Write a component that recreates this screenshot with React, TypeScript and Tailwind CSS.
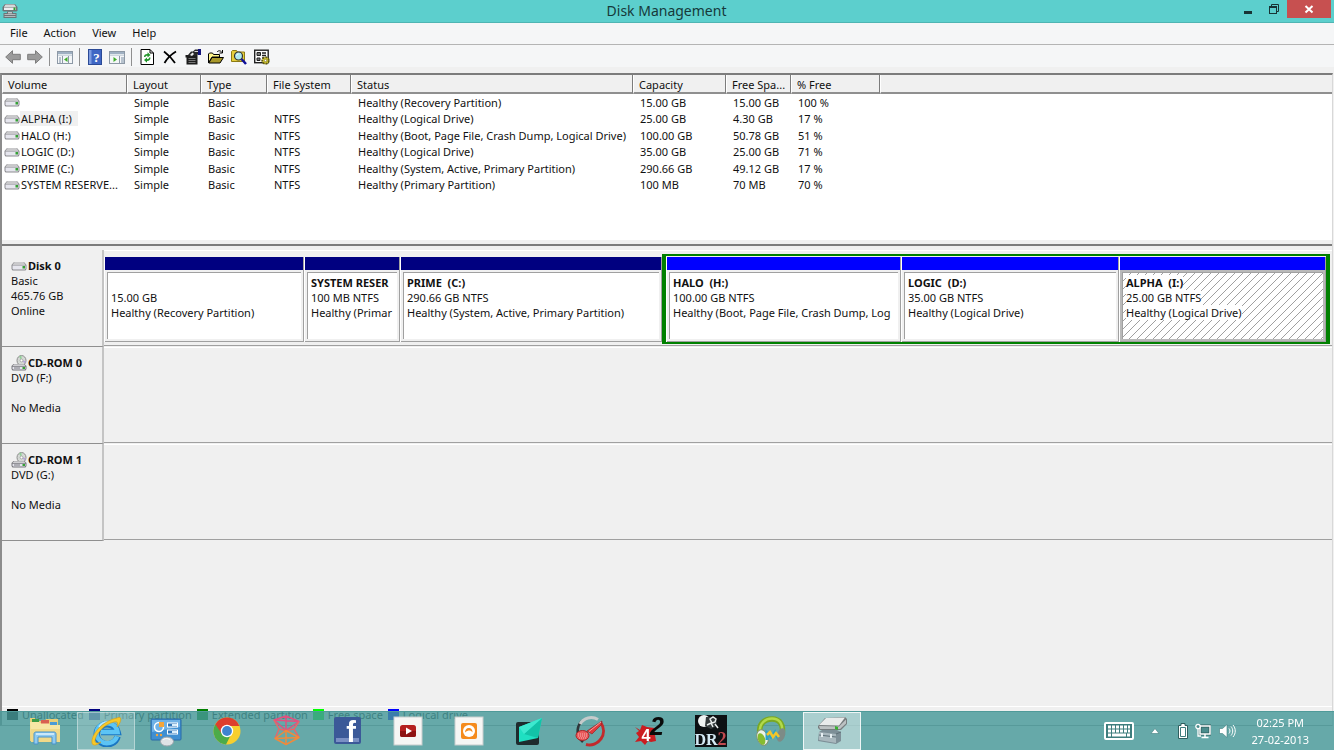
import type { ReactNode } from 'react';

type Partition = {
  name: string;
  size: string;
  status: string;
  weight: number;
  selected?: boolean;
};

const columns = [
  { label: 'Volume', width: 'w-[125px]' },
  { label: 'Layout', width: 'w-[74px]' },
  { label: 'Type', width: 'w-[66px]' },
  { label: 'File System', width: 'w-[84px]' },
  { label: 'Status', width: 'w-[282px]' },
  { label: 'Capacity', width: 'w-[93px]' },
  { label: 'Free Spa...', width: 'w-[65px]' },
  { label: '% Free', width: 'w-[89px]' },
];

const volumes = [
  { name: '', fs: '', status: 'Healthy (Recovery Partition)', capacity: '15.00 GB', free: '15.00 GB', percent: '100 %' },
  { name: 'ALPHA (I:)', fs: 'NTFS', status: 'Healthy (Logical Drive)', capacity: '25.00 GB', free: '4.30 GB', percent: '17 %', selected: true },
  { name: 'HALO (H:)', fs: 'NTFS', status: 'Healthy (Boot, Page File, Crash Dump, Logical Drive)', capacity: '100.00 GB', free: '50.78 GB', percent: '51 %' },
  { name: 'LOGIC (D:)', fs: 'NTFS', status: 'Healthy (Logical Drive)', capacity: '35.00 GB', free: '25.00 GB', percent: '71 %' },
  { name: 'PRIME (C:)', fs: 'NTFS', status: 'Healthy (System, Active, Primary Partition)', capacity: '290.66 GB', free: '49.12 GB', percent: '17 %' },
  { name: 'SYSTEM RESERVE...', fs: 'NTFS', status: 'Healthy (Primary Partition)', capacity: '100 MB', free: '70 MB', percent: '70 %' },
];

const primary: Partition[] = [
  { name: '', size: '15.00 GB', status: 'Healthy (Recovery Partition)', weight: 198 },
  { name: 'SYSTEM RESER', size: '100 MB NTFS', status: 'Healthy (Primar', weight: 94 },
  { name: 'PRIME  (C:)', size: '290.66 GB NTFS', status: 'Healthy (System, Active, Primary Partition)', weight: 260 },
];

const logical: Partition[] = [
  { name: 'HALO  (H:)', size: '100.00 GB NTFS', status: 'Healthy (Boot, Page File, Crash Dump, Log', weight: 233 },
  { name: 'LOGIC  (D:)', size: '35.00 GB NTFS', status: 'Healthy (Logical Drive)', weight: 216 },
  { name: 'ALPHA  (I:)', size: '25.00 GB NTFS', status: 'Healthy (Logical Drive)', weight: 205, selected: true },
];

const legend = [
  { label: 'Unallocated', color: 'bg-black' },
  { label: 'Primary partition', color: 'bg-[#000080]' },
  { label: 'Extended partition', color: 'bg-[#008000]' },
  { label: 'Free space', color: 'bg-[#00ff00]' },
  { label: 'Logical drive', color: 'bg-[#0000ff]' },
];

/* Small icons */

const DriveIcon = () => (
  <svg viewBox="0 0 16 10" className="h-[10px] w-4 shrink-0" aria-hidden="true">
    <path d="M3 1h10l2.500 3v4l-1 1.500h-13L.5 8V4z" fill="#8b8b8f" />
    <path d="M3.500 1h9l2 3h-13z" fill="#c9c9cb" />
    <path d="M1.500 4.500h13v3l-.7 1H2.200l-.7-1z" fill="#e6e6ee" />
    <rect x="11.500" y="5" width="2.500" height="2.500" fill="#35a035" />
  </svg>
);

const CdDriveIcon = () => (
  <svg viewBox="0 0 16 16" className="h-4 w-4 shrink-0" aria-hidden="true">
    <ellipse cx="10.500" cy="5.500" rx="4.500" ry="5" fill="#d4d8d4" stroke="#8e8e8e" />
    <path d="M10.500 5.500L8 1.500l2.500-1z" fill="#8fcf96" />
    <path d="M10.500 5.500l3.500 3 .8-2.500z" fill="#b7a6d8" />
    <circle cx="10.500" cy="5.500" r="1.400" fill="#fff" stroke="#888" strokeWidth=".6" />
    <path d="M2.500 9h11L15.500 11v3l-1 1.500h-13L.5 14v-3z" fill="#77777c" />
    <path d="M3 9.300h10l1.500 1.700h-13z" fill="#cfcfd2" />
    <path d="M1.500 11.800h13v1.700l-.7 1H2.200l-.7-1z" fill="#e4e4ec" />
    <rect x="11.500" y="12" width="2.500" height="2" fill="#35a035" />
    <path d="M3 13h6" stroke="#77777c" />
  </svg>
);

const AppIcon = () => (
  <svg viewBox="0 0 16 16" className="h-4 w-4 shrink-0" aria-hidden="true">
    <path d="M3 1h10l2.500 3v3.500l-1 1h-13l-1-1V4z" fill="#6f7477" />
    <path d="M3.500 1.500h9L14 4H2z" fill="#d5d8d9" />
    <rect x="2" y="4.500" width="12" height="2.500" fill="#eceef0" />
    <rect x="11.500" y="4.500" width="2" height="2.500" fill="#2fa02f" />
    <path d="M5 8.500h6v1.500h3.500v5h-13v-5H5z" fill="#6d7477" />
    <path d="M2.500 11h11v1h-11zM2.500 13h11v1h-11z" fill="#b3babd" />
    <rect x="6" y="9.300" width="4" height="1" fill="#e8ecee" />
  </svg>
);

const BackIcon = () => (
  <svg viewBox="0 0 16 16" className="h-4 w-4">
    <path d="M.7 8L7.500 1.700v3.600h7.800v5.400H7.500v3.600z" fill="#9b9b9b" stroke="#7d7d7d" />
  </svg>
);

const ForwardIcon = () => (
  <svg viewBox="0 0 16 16" className="h-4 w-4">
    <path d="M15.300 8L8.500 1.700v3.600H.7v5.400h7.800v3.600z" fill="#9b9b9b" stroke="#7d7d7d" />
  </svg>
);

const TreePaneIcon = () => (
  <svg viewBox="0 0 16 16" className="h-4 w-4">
    <rect x=".5" y="2.500" width="15" height="12" fill="#f4f6f8" stroke="#8d99a6" />
    <path d="M1 3h14v2H1z" fill="#9fb0c2" />
    <path d="M1 5.500h14v1.500H1z" fill="#cdd6df" />
    <path d="M5.500 7v7M11.500 7v7" stroke="#8d99a6" />
    <path d="M2 9h2M2 11h2M2 13h2" stroke="#7d90a5" />
    <path d="M10.500 8v5L7 10.500z" fill="#3fae2a" />
  </svg>
);

const ActionPaneIcon = () => (
  <svg viewBox="0 0 16 16" className="h-4 w-4">
    <rect x=".5" y="2.500" width="15" height="12" fill="#f4f6f8" stroke="#8d99a6" />
    <path d="M1 3h14v2H1z" fill="#9fb0c2" />
    <path d="M1 5.500h14v1.500H1z" fill="#cdd6df" />
    <path d="M10.500 7v7" stroke="#8d99a6" />
    <path d="M12 9h3M12 11h3M12 13h3" stroke="#7d90a5" />
    <path d="M4.500 8v5L8 10.500z" fill="#3fae2a" />
  </svg>
);

const HelpIcon = () => (
  <svg viewBox="0 0 16 16" className="h-4 w-4">
    <rect x="1.500" y=".5" width="13" height="15" fill="#3f66c4" stroke="#2b4a96" />
    <path d="M2 1h2.500v14H2z" fill="#7d9be0" />
    <text x="9.500" y="13" textAnchor="middle" fontSize="13" fontWeight="700" fontFamily="Liberation Serif, serif" fill="#fff">?</text>
  </svg>
);

const RefreshIcon = () => (
  <svg viewBox="0 0 16 16" className="h-4 w-4">
    <path d="M2 .5h9l3.500 3.500v11.500H2z" fill="#fff" stroke="#000" />
    <path d="M11 .5v3.500h3.500" fill="none" stroke="#000" />
    <path d="M5 8c0-2 1-3 3.500-3V3.200L11.500 6l-3 2.500V6.700C7 6.700 6.500 7 6.500 8z" fill="#22962a" />
    <path d="M11.500 8.500c0 2-1 3.500-3.500 3.500v1.800L5 11l3-2.500v1.700c1.500 0 2-.7 2-1.700z" fill="#22962a" />
  </svg>
);

const DeleteIcon = () => (
  <svg viewBox="0 0 16 16" className="h-4 w-4">
    <path d="M2 2.500c4 3 8 7 11 11.500M14 2.500C9 5.500 5 9.500 2.500 14" fill="none" stroke="#000" strokeWidth="1.800" />
  </svg>
);

const PropertiesIcon = () => (
  <svg viewBox="0 0 16 16" className="h-4 w-4">
    <path d="M.5 6h12v9.500h-11V8.500h-1z" fill="#1c1c1c" />
    <path d="M3.500 9.500h7M3.500 11.500h7M3.500 13.500h7" stroke="#777" />
    <path d="M3 6l3-3.500h2L10 .5h3v5l-3 1.500-2-1-2 2z" fill="#2a2a2a" />
    <path d="M5 6l2.500-2.500L9 5 7 7z" fill="#eee" />
    <path d="M9.500 2.500H13" stroke="#d8d8d8" />
    <path d="M13 0h3v6h-3z" fill="#14147a" />
  </svg>
);

const OpenIcon = () => (
  <svg viewBox="0 0 16 16" className="h-4 w-4">
    <path d="M.5 14V5l1-1h3l1 1.500h6V8H4z" fill="#fff58a" stroke="#000" />
    <path d="M.8 14L4 8.500h11.500L12 14z" fill="#a8982a" stroke="#000" />
    <path d="M9 3c1.500-1.700 3.500-1.700 5 .5M14.500 1v3h-3" fill="none" stroke="#000" />
  </svg>
);

const FindIcon = () => (
  <svg viewBox="0 0 16 16" className="h-4 w-4">
    <path d="M.5 12.500v-10l1-1h4l1 1.500h7v9.500z" fill="#e6cf3c" stroke="#8c7b14" />
    <circle cx="7.500" cy="7" r="4" fill="#aee9ef" stroke="#333" strokeWidth="1.200" />
    <path d="M10.500 10l4.500 5" stroke="#10109a" strokeWidth="2.500" />
    <path d="M5.500 6.500c.5-1 1-1.500 2-1.500" stroke="#fff" fill="none" />
  </svg>
);

const SettingsIcon = () => (
  <svg viewBox="0 0 16 16" className="h-4 w-4">
    <rect x=".7" y="1.200" width="13.500" height="12.500" fill="#fff" stroke="#222" strokeWidth="1.400" />
    <path d="M3 3.500h3.500v3H3zM3 9h3v2.500H3z" fill="#777" stroke="#222" />
    <path d="M8 4h4M8 6.500h4M8 9h2" stroke="#222" strokeWidth="1.300" />
    <circle cx="11.500" cy="11.500" r="3.300" fill="#d9cc32" stroke="#5f590f" strokeDasharray="2 1" strokeWidth="1.800" />
    <circle cx="11.500" cy="11.500" r="1.200" fill="#fff" stroke="#5f590f" strokeWidth=".6" />
  </svg>
);

/* Taskbar icons */

const TaskIcon = ({ children }: { children: ReactNode }) => (
  <svg viewBox="0 0 32 32" className="h-8 w-8" aria-hidden="true">{children}</svg>
);

const taskbarApps: { label: string; state?: 'open' | 'active'; icon: ReactNode }[] = [
  {
    label: 'File Explorer',
    icon: (
      <TaskIcon>
        <path d="M1 3h5l1 3h9l1-2h12v22H1z" fill="#e9cf78" />
        <path d="M3 4h7v4H3z" fill="#3d9b45" />
        <path d="M12 5h8v4h-8z" fill="#d85f50" />
        <path d="M21 7h7v4h-7z" fill="#4b9bd6" />
        <path d="M1 7h9l2 1.500h8L21 10h10v17H2z" fill="#f7e6a4" />
        <path d="M2 14h29v13H2z" fill="#f1d988" />
        <path d="M5 29V19c0-1 .5-2 2-2h18c1.500 0 2 1 2 2v10h-4v-7H9v7z" fill="#8fcaf0" stroke="#4a93c8" />
        <path d="M7 19h18" stroke="#dff2fd" strokeWidth="1.500" />
      </TaskIcon>
    ),
  },
  {
    label: 'Internet Explorer',
    state: 'open',
    icon: (
      <TaskIcon>
        <g fill="none">
          <path d="M27.500 21.500A10.500 10 0 1 1 27.500 17H11" stroke="#1a76c2" strokeWidth="6.500" />
          <path d="M27 21.500A10.500 10 0 1 1 27.500 17H11" stroke="#5cc4f5" strokeWidth="4.500" />
          <path d="M9 12c2-4 6-5.500 10-5" stroke="#b9e8fd" strokeWidth="1.500" />
        </g>
        <path d="M27 3c6-3 4 5 0 9 1-4 1-6-3-5C14 9 5 20 5 26c0 3 4 2 6 1-5 4-10 5-9-2C4 15 16 5 27 3z" fill="#f7c828" stroke="#d59a12" strokeWidth=".6" />
      </TaskIcon>
    ),
  },
  {
    label: 'Control Panel',
    icon: (
      <TaskIcon>
        <rect x="1" y="4" width="30" height="21" rx="1" fill="#3f8fd2" stroke="#2a6ba6" />
        <path d="M2 5h28v7L2 17z" fill="#6fb2e6" />
        <circle cx="9" cy="12" r="4.500" fill="none" stroke="#fff" strokeWidth="1.500" />
        <path d="M9 7h5v5H9z" fill="#f5a53a" />
        <rect x="17.500" y="8" width="10" height="4" fill="#2e75b8" stroke="#fff" />
        <rect x="17.500" y="15" width="10" height="4" fill="#2e75b8" stroke="#fff" />
        <path d="M22 9h5v2h-5zM22 16h5v2h-5z" fill="#d9effc" />
        <circle cx="7" cy="20" r="1.200" fill="#f5a53a" />
        <circle cx="11" cy="20" r="1.200" fill="#f5a53a" />
        <ellipse cx="17" cy="26.500" rx="6.500" ry="4.500" fill="#dfe3e6" stroke="#97a2a9" />
        <path d="M13 25c2-2 5-2 7 0" stroke="#fff" fill="none" />
      </TaskIcon>
    ),
  },
  {
    label: 'Google Chrome',
    icon: (
      <TaskIcon>
        <circle cx="16" cy="16" r="13.500" fill="#f7cf2e" />
        <path d="M4.300 9.200A13.500 13.500 0 0 0 15 29.500l5-10z" fill="#4cab49" />
        <path d="M4.300 9.200L11 19l5-3v-5h12.500A13.500 13.500 0 0 0 4.300 9.200z" fill="#dd3d2e" />
        <circle cx="16" cy="16" r="6.200" fill="#fff" />
        <circle cx="16" cy="16" r="4.900" fill="#3f83d0" />
      </TaskIcon>
    ),
  },
  {
    label: 'Zune',
    icon: (
      <TaskIcon>
        <g fill="none" strokeWidth="1.500" strokeLinejoin="round">
          <path d="M15 1L3 5l12 10.500L28 6.500zM15 1v14.500M3 5l25 1.500" stroke="#e0527f" />
          <path d="M3 5l5 9-4 9.500M28 6.500L23 14l5 8.500M8 14l7 1.500 8-1.500" stroke="#e5686a" />
          <path d="M15 15.500L4 23.500l11 6 13-7zM15 15.500v14M4 23.500l24-1" stroke="#f08a3c" />
        </g>
      </TaskIcon>
    ),
  },
  {
    label: 'Facebook',
    icon: (
      <TaskIcon>
        <rect x="2" y="2" width="27" height="27" rx="2" fill="#3b5998" />
        <rect x="4" y="23" width="23" height="4" fill="#7a90c4" />
        <text x="19" y="27" textAnchor="middle" fontSize="29" fontWeight="700" fontFamily="Liberation Sans, sans-serif" fill="#fff">f</text>
      </TaskIcon>
    ),
  },
  {
    label: 'YouTube',
    icon: (
      <TaskIcon>
        <rect x="2" y="2" width="28" height="28" fill="#f6f6f4" stroke="#c8cdcd" />
        <rect x="8" y="10" width="16" height="12" rx="2.500" fill="#b5201f" />
        <path d="M8 16h16v4a2 2 0 0 1-2 2H10a2 2 0 0 1-2-2z" fill="#8f1414" />
        <path d="M14 12.500v7l6-3.500z" fill="#fff" />
      </TaskIcon>
    ),
  },
  {
    label: 'Grooveshark',
    icon: (
      <TaskIcon>
        <rect x="2" y="2" width="28" height="28" fill="#f6f6f4" stroke="#c8cdcd" />
        <rect x="8" y="8" width="16" height="16" rx="2" fill="#f58b1c" />
        <circle cx="16" cy="16" r="6" fill="#fff" />
        <path d="M12 17.500c0-3 2-5 4.500-4.500 2 .3 3 2 3 4.500-1-1.500-2-2-3-2-1.500 0-3 .5-4.500 2z" fill="#f58b1c" />
      </TaskIcon>
    ),
  },
  {
    label: 'Splashtop',
    icon: (
      <TaskIcon>
        <rect x="3" y="7" width="23" height="23" rx="2" fill="#1e2b2d" />
        <path d="M6 12L29 3l-4 20-19 4z" fill="#1fe0c2" />
        <path d="M29 3L11 19l14 4z" fill="#12c3a8" />
        <path d="M6 12L29 3 11 19z" fill="#3de9cf" />
      </TaskIcon>
    ),
  },
  {
    label: 'Gauge',
    icon: (
      <TaskIcon>
        <path d="M8 6A14 14 0 0 0 6 24l3 3" fill="none" stroke="#2e3639" strokeWidth="2.500" />
        <path d="M6 9A13 13 0 0 1 24 4.500" fill="none" stroke="#c5cbcb" strokeWidth="3" />
        <path d="M27 8A14 14 0 0 1 12 29.500" fill="none" stroke="#c22a2c" strokeWidth="3" />
        <path d="M28 6l-1 4-9 9-5-3z" fill="#e03a3c" stroke="#8e1a1c" strokeWidth=".6" />
        <path d="M27 7L15 16.500" stroke="#f7a0a0" />
        <ellipse cx="8.500" cy="20.500" rx="6.500" ry="5" fill="#ea5a5c" stroke="#a82426" />
        <path d="M4 19h9M4 21h9M5 23h7" stroke="#f9b0b0" strokeDasharray="1 1" />
      </TaskIcon>
    ),
  },
  {
    label: '42',
    icon: (
      <TaskIcon>
        <path d="M1 12l5 3 2-5 5 2 7 1 1 7 1 6-5 1-3-1-3 4-4-4-6 1 4-5-3-4 3-2z" fill="#cb1c20" />
        <text x="12" y="26" textAnchor="middle" fontSize="16" fontWeight="700" fontFamily="Liberation Sans, sans-serif" fill="#fff">4</text>
        <text x="23" y="20" textAnchor="middle" fontSize="25" fontWeight="700" fontStyle="italic" fontFamily="Liberation Sans, sans-serif" fill="#0a0a0a">2</text>
      </TaskIcon>
    ),
  },
  {
    label: 'DR2',
    icon: (
      <TaskIcon>
        <rect width="32" height="32" fill="#0d1013" />
        <circle cx="9" cy="6" r="6" fill="#f0f3f3" />
        <path d="M11 2h8l3 5-2 5-4 2-6-3z" fill="#32383a" />
        <path d="M15 4l3-2 3 2-1 3-3 1zM12 10l4-2 2 4M20 9l3 4" stroke="#e8ecec" fill="none" strokeWidth="1.500" />
        <text x="11" y="30" textAnchor="middle" fontSize="16" fontWeight="700" fontFamily="Liberation Serif, serif" fill="#d5eaf5">DR</text>
        <text x="27" y="30" textAnchor="middle" fontSize="18" fontWeight="700" fontFamily="Liberation Serif, serif" fill="#c04a50">2</text>
      </TaskIcon>
    ),
  },
  {
    label: 'Music',
    icon: (
      <TaskIcon>
        <path d="M5 20C3 9 9 4 17 4s12 6 10 16" fill="none" stroke="#7aa824" strokeWidth="5.500" />
        <path d="M5 17C4 9 10 3.500 17 3.500s11 5 10 13" fill="none" stroke="#b2da4a" strokeWidth="2.500" />
        <ellipse cx="7.500" cy="22.500" rx="5.500" ry="8" transform="rotate(-20 7.500 22.500)" fill="#edf3e8" stroke="#7d9070" />
        <ellipse cx="6.500" cy="24" rx="3.500" ry="6" transform="rotate(-20 6.500 24)" fill="#86bc30" />
        <ellipse cx="26" cy="20" rx="4" ry="7" transform="rotate(18 26 20)" fill="#7d8b86" />
        <path d="M12 25v-7l4 4 4-5 3 6" fill="none" stroke="#2aa2c8" strokeWidth="3" />
        <path d="M12 20l3-3 3 5 3-4 3 4" fill="none" stroke="#f3c52a" strokeWidth="2.500" />
      </TaskIcon>
    ),
  },
  {
    label: 'Disk Management',
    state: 'active',
    icon: (
      <TaskIcon>
        <path d="M2 11L9 3l20-1 2 2v5l-6 6H4l-2-2z" fill="#777d7f" />
        <path d="M3 10l7-7 19-.5-6 8z" fill="#e9ebeb" />
        <path d="M3 11l20 .5 7-7v4l-6 5.500H4z" fill="#bcc1c2" />
        <path d="M19 11l3 1v3l-3-1z" fill="#39b030" />
        <path d="M3 17l3-2h15l4 2v9l-5 3L2 26z" fill="#7d8f97" />
        <path d="M3 17l17 2v9L3 25z" fill="#a9b8be" />
        <path d="M3 20l17 2M20 19l5-2" stroke="#5e7078" />
        <path d="M6 18v4M15 19v4" stroke="#e6eff2" strokeWidth="2" />
      </TaskIcon>
    ),
  },
];

/* Window parts */

const Divider = () => <span className="mr-px h-[18px] w-px bg-[#8f8f8f]" />;

const ToolButton = ({ label, children }: { label: string; children: ReactNode }) => (
  <button type="button" aria-label={label} className="size-4 shrink-0">{children}</button>
);

const PartitionBlock = ({ part, bar }: { part: Partition; bar: string }) => (
  <div
    className="flex h-[85px] min-w-0 basis-0 flex-col border-r border-l border-r-[#a0a0a0] border-l-white"
    style={{ flexGrow: part.weight }}
  >
    <div className={`h-[13px] shrink-0 ${bar}`} />
    <div className={`flex-1 border-b border-[#a0a0a0] p-0.5 ${part.selected ? 'bg-[#b9b9b9]' : 'bg-[#f0f0f0]'}`}>
      <div
        className={`h-full border-t border-l border-[#a0a0a0] pt-0.5 pl-[3px] ${
          part.selected
            ? 'bg-[linear-gradient(135deg,#fff_46%,#a0a0a0_46%,#a0a0a0_54%,#fff_54%)] bg-[length:8px_8px]'
            : 'bg-white'
        }`}
      >
        {[part.name, part.size, part.status].map((line, i) => (
          <p key={i} className={`h-[15px] overflow-hidden whitespace-pre ${i === 0 ? 'font-bold' : ''}`}>
            <span className={part.selected ? 'bg-white' : ''}>{line}</span>
          </p>
        ))}
      </div>
    </div>
  </div>
);

const DiskRow = ({ title, icon, lines, children }: { title: string; icon: ReactNode; lines: string[]; children?: ReactNode }) => (
  <section className="flex h-[97px]">
    <div className="w-[102px] shrink-0 border-r-2 border-b border-r-[#c4c4c4] border-b-[#8f8f8f] pt-2 pl-[9px]">
      <h2 className="flex h-[15px] items-center gap-px font-bold">
        {icon}
        {title}
      </h2>
      {lines.map((line, i) => (
        <p key={i} className="h-[15px]">{line}</p>
      ))}
    </div>
    <div className="mb-px flex min-w-0 flex-1 items-start border-t border-b border-t-white border-b-[#a0a0a0] pr-0.5">
      {children}
    </div>
  </section>
);

const App = () => {
  return (
    <div className="flex h-screen flex-col overflow-hidden bg-[#f0f0f0] font-['Noto_Sans',sans-serif] text-[11px] leading-[15px] text-[#111]">
      {/* Title bar */}
      <header className="flex h-[23px] shrink-0 items-center border-b border-[#4fb5b3] bg-[#5ccfcd] pl-0.5">
        <div className="flex flex-1 items-center">
          <AppIcon />
        </div>
        <h1 className="text-sm text-[#16393a]">Disk Management</h1>
        <div className="flex h-full flex-1 items-start justify-end pr-[3px]">
          <button type="button" aria-label="Minimize" className="flex h-[18px] w-[26px] items-center justify-center">
            <svg viewBox="0 0 12 12" className="size-3"><path d="M2 8h8v3H2z" fill="#183435" /></svg>
          </button>
          <button type="button" aria-label="Restore" className="flex h-[18px] w-[26px] items-center justify-center">
            <svg viewBox="0 0 12 12" className="size-3" fill="none" stroke="#183435">
              <path d="M3.500 3V1.500h7v7H9" />
              <rect x="1.500" y="3.500" width="7" height="7" />
              <path d="M1 4.500h8" />
            </svg>
          </button>
          <button type="button" aria-label="Close" className="flex h-[18px] w-11 items-center justify-center bg-[#c75050]">
            <svg viewBox="0 0 12 12" className="size-3"><path d="M2.500 3l7 6.500M9.500 3l-7 6.500" stroke="#fff" strokeWidth="2" /></svg>
          </button>
        </div>
      </header>

      {/* Menu */}
      <nav className="flex h-[22px] shrink-0 items-center gap-4 border-b border-[#b4b4b4] bg-[#f5f6f7] pb-0.5 pl-[10px]">
        {['File', 'Action', 'View', 'Help'].map((item) => (
          <button key={item} type="button">{item}</button>
        ))}
      </nav>

      {/* Toolbar */}
      <div className="mb-[6px] flex h-[22px] shrink-0 items-center bg-[#f5f6f7] pt-0.5 pl-[5px]">
        <div className="flex items-center gap-[6px]">
          <ToolButton label="Back"><BackIcon /></ToolButton>
          <ToolButton label="Forward"><ForwardIcon /></ToolButton>
          <Divider />
          <ToolButton label="Show console tree"><TreePaneIcon /></ToolButton>
          <Divider />
          <ToolButton label="Help"><HelpIcon /></ToolButton>
          <ToolButton label="Show action pane"><ActionPaneIcon /></ToolButton>
          <Divider />
        </div>
        <div className="flex items-center gap-[7px] pl-[6px]">
          <ToolButton label="Refresh"><RefreshIcon /></ToolButton>
          <ToolButton label="Delete"><DeleteIcon /></ToolButton>
          <ToolButton label="Properties"><PropertiesIcon /></ToolButton>
          <ToolButton label="Open"><OpenIcon /></ToolButton>
          <ToolButton label="Find"><FindIcon /></ToolButton>
          <ToolButton label="Settings"><SettingsIcon /></ToolButton>
        </div>
      </div>

      <main className="mr-px mb-6 flex min-h-0 flex-1 flex-col border-t-2 border-r border-b border-l-2 border-t-[#7c7c7c] border-r-[#d8d8d8] border-b-[#a0a0a0] border-l-[#8c8c8c]">
        {/* Volume list */}
        <div className="h-[165px] shrink-0 bg-white">
          <table className="h-[118px] w-full table-fixed border-separate border-spacing-0">
            <thead>
              <tr className="h-[19px] bg-[#f0f0f0] text-left">
                {columns.map((col) => (
                  <th
                    key={col.label}
                    className={`border-r border-b-2 border-l border-r-[#7c7c7c] border-b-[#8f8f8f] border-l-white p-0 pt-px pl-[5px] font-normal whitespace-nowrap ${col.width}`}
                  >
                    {col.label}
                  </th>
                ))}
                <td className="border-b-2 border-l border-b-[#8f8f8f] border-l-white p-0" />
              </tr>
            </thead>
            <tbody>
              {volumes.map((vol) => (
                <tr key={vol.status + vol.name}>
                  <td className="p-0 pl-0.5">
                    <div className="flex items-center">
                      <DriveIcon />
                      <span className={`pr-[6px] pl-px whitespace-nowrap ${vol.selected ? 'bg-[#f0f0f0]' : ''}`}>{vol.name}</span>
                    </div>
                  </td>
                  <td className="p-0 pl-[7px]">Simple</td>
                  <td className="p-0 pl-[7px]">Basic</td>
                  <td className="p-0 pl-[7px]">{vol.fs}</td>
                  <td className="p-0 pl-[7px] whitespace-nowrap">{vol.status}</td>
                  <td className="p-0 pl-[7px]">{vol.capacity}</td>
                  <td className="p-0 pl-[7px] whitespace-nowrap">{vol.free}</td>
                  <td className="p-0 pl-[7px]">{vol.percent}</td>
                  <td className="p-0" />
                </tr>
              ))}
            </tbody>
          </table>
        </div>
        <div className="h-[6px] shrink-0 border-b-2 border-[#7c7c7c] bg-[#f0f0f0]" />

        {/* Disks */}
        <div className="min-h-0 flex-1 overflow-hidden border-b border-white pt-1">
          <DiskRow title="Disk 0" icon={<DriveIcon />} lines={['Basic', '465.76 GB', 'Online']}>
            <div className="mt-[6px] flex min-w-0 basis-0" style={{ flexGrow: 558 }}>
              {primary.map((part) => (
                <PartitionBlock key={part.size} part={part} bar="bg-[#000080]" />
              ))}
            </div>
            <div
              className="mt-[3px] flex min-w-0 basis-0 border-x-4 border-y-2 border-[#008000] pt-px"
              style={{ flexGrow: 660 }}
            >
              {logical.map((part) => (
                <PartitionBlock key={part.size} part={part} bar="bg-[#0000ff]" />
              ))}
            </div>
          </DiskRow>
          <DiskRow title="CD-ROM 0" icon={<CdDriveIcon />} lines={['DVD (F:)', '', 'No Media']} />
          <DiskRow title="CD-ROM 1" icon={<CdDriveIcon />} lines={['DVD (G:)', '', 'No Media']} />
        </div>

        {/* Legend */}
        <ul className="flex h-[18px] shrink-0 items-start gap-[5px] pl-[5px]">
          {legend.map((item) => (
            <li key={item.label} className="flex items-center gap-1">
              <span className={`size-[11px] ${item.color}`} />
              {item.label}
            </li>
          ))}
        </ul>
      </main>

      {/* Taskbar */}
      <footer className="fixed inset-x-0 bottom-0 flex h-[39px] items-center justify-between border-t border-[#4f9a99] bg-[rgba(71,153,152,0.82)] text-white">
        <div className="ml-[15px] grid h-full w-[847px] shrink-0 grid-cols-14">
          {taskbarApps.map((app) => (
            <button
              key={app.label}
              type="button"
              aria-label={app.label}
              className={`mx-px flex items-center justify-center border ${
                app.state === 'active'
                  ? 'border-white/80 bg-white/45'
                  : app.state === 'open'
                    ? 'border-white/40 bg-white/20'
                    : 'border-transparent'
              }`}
            >
              {app.icon}
            </button>
          ))}
        </div>

        <div className="flex items-center pr-[25px]">
          <button type="button" aria-label="Touch keyboard">
            <svg viewBox="0 0 30 18" className="h-[18px] w-[30px]">
              <rect x="1" y="1" width="28" height="16" rx="1" fill="#3e7d7d" stroke="#fff" strokeWidth="2" />
              <path d="M4 5h22M4 9h22" stroke="#fff" strokeWidth="3" strokeDasharray="3 1" />
              <path d="M4 13h3M8 13h14M23 13h3" stroke="#fff" strokeWidth="3" />
            </svg>
          </button>
          <button type="button" aria-label="Show hidden icons" className="ml-4">
            <svg viewBox="0 0 10 8" className="h-2 w-[10px]"><path d="M5 1.500L9 6.500H1z" fill="#fff" stroke="#3e7d7d" strokeWidth=".6" /></svg>
          </button>
          <button type="button" aria-label="Battery" className="ml-[15px]">
            <svg viewBox="0 0 16 16" className="size-4">
              <path d="M6 .5h4v2h2.500v13h-9v-13H6z" fill="#fff" stroke="#2f5f5f" />
              <path d="M5.500 4.500h5v9h-5z" fill="#fff" stroke="#3e7d7d" />
            </svg>
          </button>
          <button type="button" aria-label="Network" className="ml-1">
            <svg viewBox="0 0 16 16" className="size-4">
              <rect x="5" y="3" width="10" height="8" fill="#4b8c8c" stroke="#2f5f5f" strokeWidth="3" />
              <path d="M10 11v4M6.500 14.500h7" stroke="#fff" strokeWidth="1.500" />
              <rect x="5" y="3" width="10" height="8" fill="none" stroke="#fff" strokeWidth="1.500" />
              <circle cx="3" cy="3.500" r="2.200" fill="#4b8c8c" stroke="#fff" strokeWidth="1.300" />
              <path d="M3 6v7h3" fill="none" stroke="#fff" strokeWidth="1.300" />
            </svg>
          </button>
          <button type="button" aria-label="Volume" className="ml-[7px]">
            <svg viewBox="0 0 18 16" className="h-4 w-[18px]">
              <path d="M1.500 5.500h3L9 1.500v13l-4.500-4h-3z" fill="#fff" stroke="#3e7d7d" strokeWidth=".6" />
              <path d="M11 5.500c1.300 1.500 1.300 3.500 0 5M13 3.500c2.300 2.500 2.300 6.500 0 9M15 2c3 3.500 3 8.500 0 12" fill="none" stroke="#fff" />
            </svg>
          </button>
          <time className="ml-4 text-center leading-[17px]">
            02:25 PM
            <br />
            27-02-2013
          </time>
        </div>
      </footer>
    </div>
  );
};

export default App;
